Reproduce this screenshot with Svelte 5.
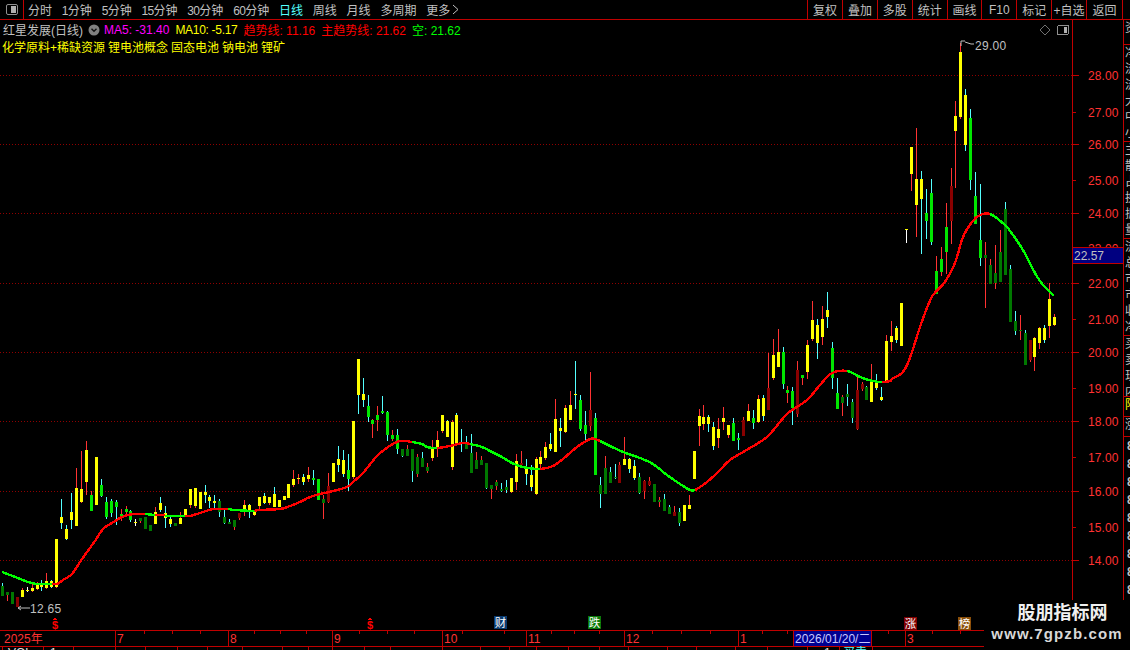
<script>
  const tools = [['', '分时'],['1','分钟'],['5','分钟'],['15','分钟'],['30','分钟'],['60','分钟'],['','日线',true],['','周线'],['','月线'],['','多周期'],['','更多']];
  const buttons = ['复权','叠加','多股','统计','画线','F10','标记','+自选','返回'];
  const raw = `2 g 583 586 596 596|7 h 592 592 595 601|12 h 592 592 604 604|17 R 597 597 607 607|22 Y 588 590 597 597|27 w 587 590 591 592|32 Y 583 588 591 592|37 Y 582 584 589 590|41 y 580 583 587 591|46 Y 573 581 588 589|51 y 580 581 587 588|56 Y 539 539 587 588|61 y 499 517 523 529|66 y 525 529 539 540|71 y 493 512 520 529|76 Y 468 488 526 526|81 Y 451 489 502 503|86 Y 441 450 482 495|91 H 491 495 511 511|96 Y 457 457 505 505|101 G 479 485 496 497|106 G 497 502 517 519|111 G 499 501 513 517|116 G 500 502 507 525|121 H 509 514 518 521|126 H 506 509 512 516|130 G 510 511 520 522|135 w 519 522 523 526|140 h 518 518 521 523|145 h 517 517 529 529|150 h 525 525 531 531|155 Y 507 512 524 524|160 y 497 503 510 512|165 y 506 513 518 528|170 y 516 519 524 527|175 h 523 523 526 526|180 Y 512 518 524 524|185 Y 509 509 516 516|190 Y 489 489 505 508|195 Y 488 488 506 508|200 Y 492 492 509 509|205 y 485 492 495 503|209 y 495 497 501 508|214 y 495 501 503 508|219 g 499 501 512 517|224 g 510 517 523 524|229 g 519 522 524 524|234 h 520 520 527 530|239 R 513 513 518 520|244 Y 500 505 512 516|249 y 504 505 510 518|254 Y 511 511 515 516|259 Y 497 497 506 509|264 y 493 496 503 504|269 Y 497 497 503 505|274 y 487 494 507 507|279 Y 500 500 507 507|284 Y 496 496 500 500|288 Y 484 484 498 498|293 Y 470 479 485 487|298 Y 474 478 479 484|303 y 474 477 482 485|308 Y 467 475 479 482|313 G 470 478 480 485|318 G 479 479 500 500|323 h 495 499 503 519|328 R 473 486 502 503|333 Y 463 463 482 482|338 y 446 459 465 472|343 y 450 460 474 477|348 G 454 470 479 491|353 Y 421 421 477 479|358 y 359 359 395 414|363 y 378 394 400 407|368 G 395 406 417 422|372 H 419 420 424 438|377 H 406 415 420 431|382 G 396 411 413 414|387 G 411 412 435 441|392 H 430 435 439 441|397 G 429 435 449 454|402 g 449 449 456 457|407 h 445 449 456 456|412 g 449 449 471 482|417 h 454 457 474 477|422 g 452 458 467 467|427 h 463 467 471 473|432 Y 440 449 458 461|437 Y 431 440 447 457|442 Y 415 415 431 433|447 y 420 421 437 437|452 Y 420 422 467 470|456 y 413 415 444 444|461 y 429 442 444 452|466 g 436 444 449 449|471 g 434 453 473 473|476 h 452 460 469 469|481 h 456 460 465 465|486 g 463 463 488 489|491 h 485 485 489 499|496 h 480 482 486 490|501 g 483 489 491 492|506 g 480 487 490 493|511 Y 478 478 492 493|516 Y 454 461 482 490|521 R 451 463 465 465|526 y 459 468 474 485|531 y 465 475 487 491|536 Y 457 459 494 495|540 Y 451 457 464 469|545 Y 442 447 458 460|550 y 433 444 449 451|555 Y 399 419 452 452|560 y 418 428 431 447|565 Y 405 408 432 433|570 Y 391 405 420 420|575 y 361 394 395 409|580 G 395 400 429 431|585 G 411 425 434 442|590 R 372 410 426 431|595 G 413 418 475 475|600 g 477 485 494 508|605 h 456 468 494 494|610 g 467 472 483 483|615 g 464 477 478 479|619 R 462 465 483 483|624 Y 437 459 465 465|629 y 458 459 469 473|634 y 460 466 478 480|639 g 473 477 493 494|644 R 480 481 491 499|649 R 477 481 485 486|654 h 484 484 502 502|659 h 497 500 502 507|664 g 494 499 511 511|669 g 505 507 514 514|674 R 506 512 516 516|679 g 508 512 523 526|684 Y 505 505 521 521|689 Y 495 505 509 509|694 Y 451 451 479 479|699 Y 409 416 426 446|703 Y 405 417 424 430|708 y 415 417 424 432|713 y 422 427 446 450|718 Y 418 429 438 448|723 Y 407 418 422 430|728 Y 425 425 435 438|733 G 418 423 441 441|738 G 433 438 440 450|743 R 417 420 436 436|748 Y 404 411 421 421|753 G 410 418 423 429|758 Y 395 399 422 423|763 y 395 398 416 421|768 R 353 388 410 410|773 Y 339 355 378 380|778 Y 329 352 367 367|783 G 347 352 384 389|787 H 386 390 393 403|792 G 387 391 408 425|797 R 361 370 414 417|802 H 375 375 378 385|807 Y 340 345 372 379|812 Y 301 320 339 341|817 y 319 325 343 359|822 Y 306 319 337 345|827 y 292 310 317 328|832 G 342 348 378 389|837 G 378 393 409 409|842 h 395 397 403 416|847 g 384 394 397 406|852 g 399 402 418 423|857 R 377 390 429 430|862 R 382 384 389 391|866 g 386 387 400 400|871 Y 364 382 402 402|876 y 374 383 388 390|881 y 387 397 400 401|886 Y 335 341 381 381|891 Y 321 336 342 351|896 y 326 328 340 343|901 Y 303 303 346 346|906 w 229 229 230 243|911 Y 147 147 174 191|916 Y 128 179 205 237|921 y 171 179 199 254|926 G 189 213 221 239|931 G 179 193 242 245|936 H 256 271 294 294|941 H 247 259 272 276|946 H 203 227 252 274|951 R 168 186 221 244|955 Y 101 116 131 188|960 Y 43 52 117 119|965 y 89 95 145 151|970 G 109 118 180 190|975 G 172 196 224 224|980 G 184 240 258 266|985 h 242 255 258 308|990 h 259 265 284 284|995 h 245 273 283 289|1000 h 230 252 282 282|1005 g 202 209 275 275|1010 g 265 269 322 322|1015 g 311 321 331 335|1020 h 315 330 331 340|1025 g 330 333 365 365|1030 R 340 340 360 362|1034 Y 337 338 357 371|1039 Y 327 328 343 349|1044 y 325 328 340 343|1049 Y 283 299 326 338|1054 Y 314 317 325 326`;
  const palette = {
    Y: ['#ffff00', '#ff3232'], y: ['#ffff00', '#54ffff'],
    G: ['#00e600', '#54ffff'], H: ['#00e600', '#ff3232'],
    g: ['#007800', '#54ffff'], h: ['#007800', '#ff3232'],
    R: ['#8a0000', '#ff3232'], w: ['#ffff00', '#ffffff']
  };
  const candles = raw.split('|').map((row) => {
    const [x, t, h, a, b, l] = row.split(' ');
    return { x: +x, body: palette[t][0], wick: palette[t][1], h: +h, a: +a, b: +b, l: +l };
  });
  const maSegments = [
    ['#00ff00','2,572 10,575 20,579 28,582 37,584 52,584'],
    ['#ff0000','52,584 57,584 63,580 72,574 80,562 87,552 95,541 103,529 112,523 122,517 133,514 145,514'],
    ['#00ff00','145,514 155,515'],
    ['#ff0000','155,515 165,515'],
    ['#00ff00','165,516 185,516'],
    ['#ff0000','185,516 190,516 200,513 213,509 220,509 228,509'],
    ['#00ff00','228,509 235,510 255,511'],
    ['#ff0000','255,511 257,510 280,509 290,506 300,502 310,497 320,494 333,491 347,487 353,482 363,473 377,456 388,447 400,441 412,442'],
    ['#00ff00','412,442 422,444 427,447 437,448'],
    ['#ff0000','437,448 450,446 463,443 470,444'],
    ['#00ff00','470,444 482,447 490,451 500,456 512,463 523,467 540,469'],
    ['#ff0000','540,469 553,466 563,459 577,447 590,439 595,439 600,441'],
    ['#00ff00','600,441 610,446 623,452 640,458 653,464 667,475 680,484 690,490 695,490'],
    ['#ff0000','695,490 707,482 720,470 730,460 750,448 767,437 780,422 788,413 807,400 820,385 832,373 847,371'],
    ['#00ff00','847,371 860,377 873,381 882,382'],
    ['#ff0000','882,382 890,381 892,379 902,373 907,365 912,352 920,327 927,308 933,295 945,282 955,263 963,237 972,222 980,215 990,214'],
    ['#00ff00','990,214 1005,225 1013,235 1023,250 1035,273 1043,285 1054,296']
  ].map(([color, s]) => [color, s.split(' ').map((p) => p.split(',').map(Number))]);

  // Catmull-Rom through the hand-read points, using neighbouring segments at the joins
  const ma = maSegments.map(([color, pts], i) => {
    const before = i > 0 ? maSegments[i - 1][1].at(-2) : pts[0];
    const after = i < maSegments.length - 1 ? maSegments[i + 1][1][1] : pts.at(-1);
    const all = [before, ...pts, after];
    let d = `M${pts[0][0]} ${pts[0][1]}`;
    for (let k = 1; k < all.length - 2; k++) {
      const [p0, p1, p2, p3] = [all[k - 1], all[k], all[k + 1], all[k + 2]];
      const c1 = [p1[0] + (p2[0] - p0[0]) / 6, p1[1] + (p2[1] - p0[1]) / 6];
      const c2 = [p2[0] - (p3[0] - p1[0]) / 6, p2[1] - (p3[1] - p1[1]) / 6];
      d += `C${c1[0].toFixed(1)} ${c1[1].toFixed(1)} ${c2[0].toFixed(1)} ${c2[1].toFixed(1)} ${p2[0]} ${p2[1]}`;
    }
    return [color, d];
  });
  const grid = [75, 144, 213, 283, 352, 421, 491, 560];
  const prices = [['28.00',75,1],['27.00',112,0],['26.00',144,1],['25.00',180,0],['24.00',213,1],['23.00',248,0],['22.00',283,1],['21.00',319,0],['20.00',352,1],['19.00',388,0],['18.00',421,1],['17.00',457,0],['16.00',491,1],['15.00',527,0],['14.00',560,1]];
  const months = [['2025年',2],['7',115],['8',228],['9',332],['10',442],['11',526],['12',624],['1',738],['3',905]];
  const topTicks = [144,172,200,254,280,306,359,387,414,462,504,551,574,599,652,681,710,762,787,888,932,960];
  const lowTicks = [2,43,73,115,145,177,207,242,282,308,332,364,390,442,480,509,536,568,599,628,667,696,735,767,807,839,872];
  const tags = [['财',494,616,'#0a3a6e'],['跌',588,616,'#0a7a0a'],['涨',904,617,'#800000'],['榜',958,617,'#8a4f0a']];
  const dollars = [55, 370];
  const side = [
    [25,['资金']],[97,['净额','流入','流出','大单','中单','小单']],[97,['主力','散户','占比','换手','振幅','量比']],[97,['流通','总股','市盈','市净','收益','净资']],[61,['买入','卖出','现量','内盘']],[20,['阳'],true],[20,['涨']]
  ];
  const digits = Array.from({ length: 9 }, () => '8');
</script>

<div class="app">
  <header class="toolbar">
    <div class="toggle-cell">
      <span class="toggle"><span class="toggle-fill"></span></span>
    </div>
    <nav class="periods">
      {#each tools as [num, label, on]}
        <span class:on>{#if num}<span class="num">{num}</span>{/if}{label}</span>
      {/each}
      <span class="more">
        <svg width="8" height="11" viewBox="0 0 8 11"><path d="M1 1l5 4.5-5 4.5" fill="none" stroke="#c0c0c0"/></svg>
      </span>
    </nav>
    <div class="buttons">
      {#each buttons as b}<span>{b}</span>{/each}
    </div>
  </header>

  <div class="body">
    <svg class="chart" width="1123" height="630" viewBox="0 20 1123 630" shape-rendering="crispEdges">
      {#each grid as y}
        <line x1="0" x2="1072" y1={y + 0.5} y2={y + 0.5} stroke="#900000" stroke-dasharray="1 2" />
      {/each}

      {#each candles as c}
        <rect x={c.x} y={c.h} width="1" height={c.l - c.h} fill={c.wick} />
        <rect x={c.x - 1} y={c.a} width="3" height={Math.max(1, c.b - c.a)} fill={c.body} />
      {/each}

      {#each ma as [color, d]}
        <path d={d} fill="none" stroke={color} stroke-width="2.4" />
      {/each}

      <rect x="1072" y="20" width="1" height="580" fill="#c00000" />
      {#each prices as [label, y, major]}
        <rect x="1073" y={y} width={major ? 6 : 3} height="1" fill="#c00000" />
        <text class="price" x="1088" y={y + 5}>{label}</text>
      {/each}
      <rect x="1072.5" y="247.5" width="51" height="16" fill="#000080" stroke="#c00000" />
      <text class="last" x="1074" y="260">22.57</text>

      <path d="M961 41v5M961 41h4M965 42l3 1 3 1 3 0" fill="none" stroke="#c0c0c0" shape-rendering="auto" />
      <text class="note" x="975" y="50">29.00</text>
      <path d="M18 608h12M18 608l3-2M18 608l3 2" fill="none" stroke="#c0c0c0" shape-rendering="auto" />
      <text class="note" x="30" y="613">12.65</text>

      <path d="M1045 25l5 5-5 5-5-5z" fill="none" stroke="#707070" shape-rendering="auto" />
      <rect x="1057.5" y="25.5" width="11" height="9" rx="1.5" fill="none" stroke="#909090" />
      <rect x="1064" y="27" width="3" height="6" fill="#b0b0b0" />

      {#each dollars as x}
        <path d="M{x - 2} 620l2-3 2 3z" fill="#ff0000" />
        <text class="dollar" x={x} y="629">$</text>
      {/each}
      {#each tags as [t, x, y, bg]}
        <rect x={x} y={y} width="13" height="13" fill={bg} />
        <text class="tag" x={x + 6.5} y={y + 11}>{t}</text>
      {/each}

      <rect x="0" y="630" width="1123" height="1" fill="#c00000" />
      <rect x="0" y="646" width="1123" height="1" fill="#c00000" />
      {#each topTicks as x}<rect x={x} y="631" width="1" height="3" fill="#c00000" />{/each}
      {#each lowTicks as x}<rect x={x} y="647" width="1" height="3" fill="#c00000" />{/each}
      {#each months as [m, x]}
        {#if x > 2}<rect x={x} y="631" width="1" height="15" fill="#c00000" />{/if}
        <text class="month" x={x + 2} y="643">{m}</text>
      {/each}
      <rect x="793.5" y="630.5" width="78" height="16" fill="#000090" stroke="#c00000" />
      <text class="date" x="795" y="643">2026/01/20/二</text>

      <text class="below" x="8" y="657">VOL</text>
      <text class="below" x="50" y="657">1</text>
      <text class="below" x="824" y="657">1</text>
      <text class="below cyan" x="843" y="657">买卖</text>
    </svg>

    <aside class="side">
      {#each side as [h, rows, hot]}
        <div class="cell" class:hot style:height="{h}px">
          {#each rows as r}<div>{r}</div>{/each}
        </div>
      {/each}
      <div class="digits">
        {#each digits as d}<div>{d}</div>{/each}
      </div>
    </aside>
  </div>

  <div class="legend">
    <div class="line one">
      <span class="gray">红星发展(日线)</span>
      <svg class="chev" width="12" height="12" viewBox="0 0 12 12" aria-hidden="true">
        <circle cx="6" cy="6" r="5.5" fill="#808080" />
        <path d="M3.5 4.8L6 7.3l2.5-2.5" fill="none" stroke="#111" stroke-width="1.4" />
      </svg>
      <span class="m5">MA5: -31.40</span>
      <span class="m10">MA10: -5.17</span>
      <span class="red">趋势线: 11.16</span>
      <span class="red">主趋势线: 21.62</span>
      <span class="grn">空: 21.62</span>
    </div>
    <div class="line two">
      <span>化学原料+稀缺资源</span><span>锂电池概念</span><span>固态电池</span><span>钠电池</span><span>锂矿</span>
    </div>
  </div>

  <div class="mark">
    <div class="mark-name">股朋指标网</div>
    <div class="mark-url">www.7gpzb.com</div>
  </div>
</div>

<style>
  :global(body) { margin: 0; background: #000; }
  .app {
    position: relative;
    width: 1130px;
    height: 650px;
    overflow: hidden;
    background: #000;
    color: #c0c0c0;
    font-family: "Liberation Sans", "Noto Sans CJK SC", sans-serif;
    font-size: 12px;
  }
  .toolbar {
    display: flex;
    align-items: center;
    height: 20px;
    box-sizing: border-box;
    border-bottom: 1px solid #c00000;
    white-space: nowrap;
  }
  .toggle-cell {
    display: flex;
    align-items: center;
    justify-content: center;
    width: 23px;
    height: 19px;
    border-right: 1px solid #c00000;
  }
  .toggle {
    display: flex;
    justify-content: flex-end;
    box-sizing: border-box;
    width: 12px;
    height: 11px;
    padding: 1px;
    border: 1px solid #909090;
    border-radius: 2px;
  }
  .toggle-fill { width: 5px; background: #b0b0b0; }
  .periods {
    display: flex;
    align-items: center;
    gap: 9.8px;
    margin-left: 4px;
  }
  .periods .on { color: #54ffff; }
  .periods .num { letter-spacing: -0.67px; }
  .periods .more { display: flex; margin-left: -8px; }
  .buttons { display: flex; margin-left: auto; height: 19px; padding-right: 7px; }
  .buttons span {
    display: flex;
    align-items: center;
    justify-content: center;
    width: 34.87px;
    box-sizing: border-box;
    border-left: 1px solid #c00000;
  }
  .buttons span:last-child { width: 37px; border-right: 1px solid #c00000; }

  .body { display: flex; height: 630px; }
  .chart { display: block; flex: none; }
  text { font-family: "Liberation Sans", "Noto Sans CJK SC", sans-serif; font-size: 12px; }
  .price { fill: #ff3232; letter-spacing: 0.1px; }
  .last { fill: #c0c0c0; }
  .note { fill: #c0c0c0; letter-spacing: 0.3px; }
  .month { fill: #ff3232; }
  .date { fill: #c8c8ff; }
  .dollar { fill: #ff0000; font-size: 11px; font-weight: 700; text-anchor: middle; }
  .tag { fill: #fff; font-size: 11.5px; text-anchor: middle; }
  .below { fill: #e0e0e0; }
  .below.cyan { fill: #54ffff; }

  .side {
    flex: none;
    width: 7px;
    height: 580px;
    box-sizing: border-box;
    border-left: 1px solid #c00000;
    overflow: hidden;
    line-height: 16px;
    white-space: nowrap;
  }
  .cell {
    box-sizing: border-box;
    border-bottom: 1px solid #c00000;
    padding-left: 1px;
    overflow: hidden;
  }
  .cell.hot { color: #ffff00; }
  .digits { padding-left: 3px; font-weight: 700; line-height: 18px; }

  .legend { position: absolute; left: 0; top: 21px; }
  .line { display: flex; align-items: center; height: 17px; white-space: nowrap; }
  .one { padding-left: 3px; }
  .one .chev { margin: 0 4px 0 5px; }
  .one .m5 { color: #ff00ff; margin-right: 6px; }
  .one .m10 { color: #ffff00; margin-right: 6px; letter-spacing: -0.3px; }
  .one .red { color: #ff0000; margin-right: 6px; }
  .one .grn { color: #00ff00; }
  .two { padding-left: 2px; gap: 3px; color: #ffff00; }

  .mark {
    position: absolute;
    left: 984px;
    top: 600px;
    width: 146px;
    height: 50px;
    box-sizing: border-box;
    padding-top: 3px;
    background: #000;
    text-align: center;
  }
  .mark-name { color: #f0f0f0; font-size: 18px; font-weight: 700; line-height: 21px; padding-left: 11px; }
  .mark-url { color: #d8d8d8; font-size: 15px; font-weight: 700; letter-spacing: 1.1px; line-height: 20px; }
</style>
